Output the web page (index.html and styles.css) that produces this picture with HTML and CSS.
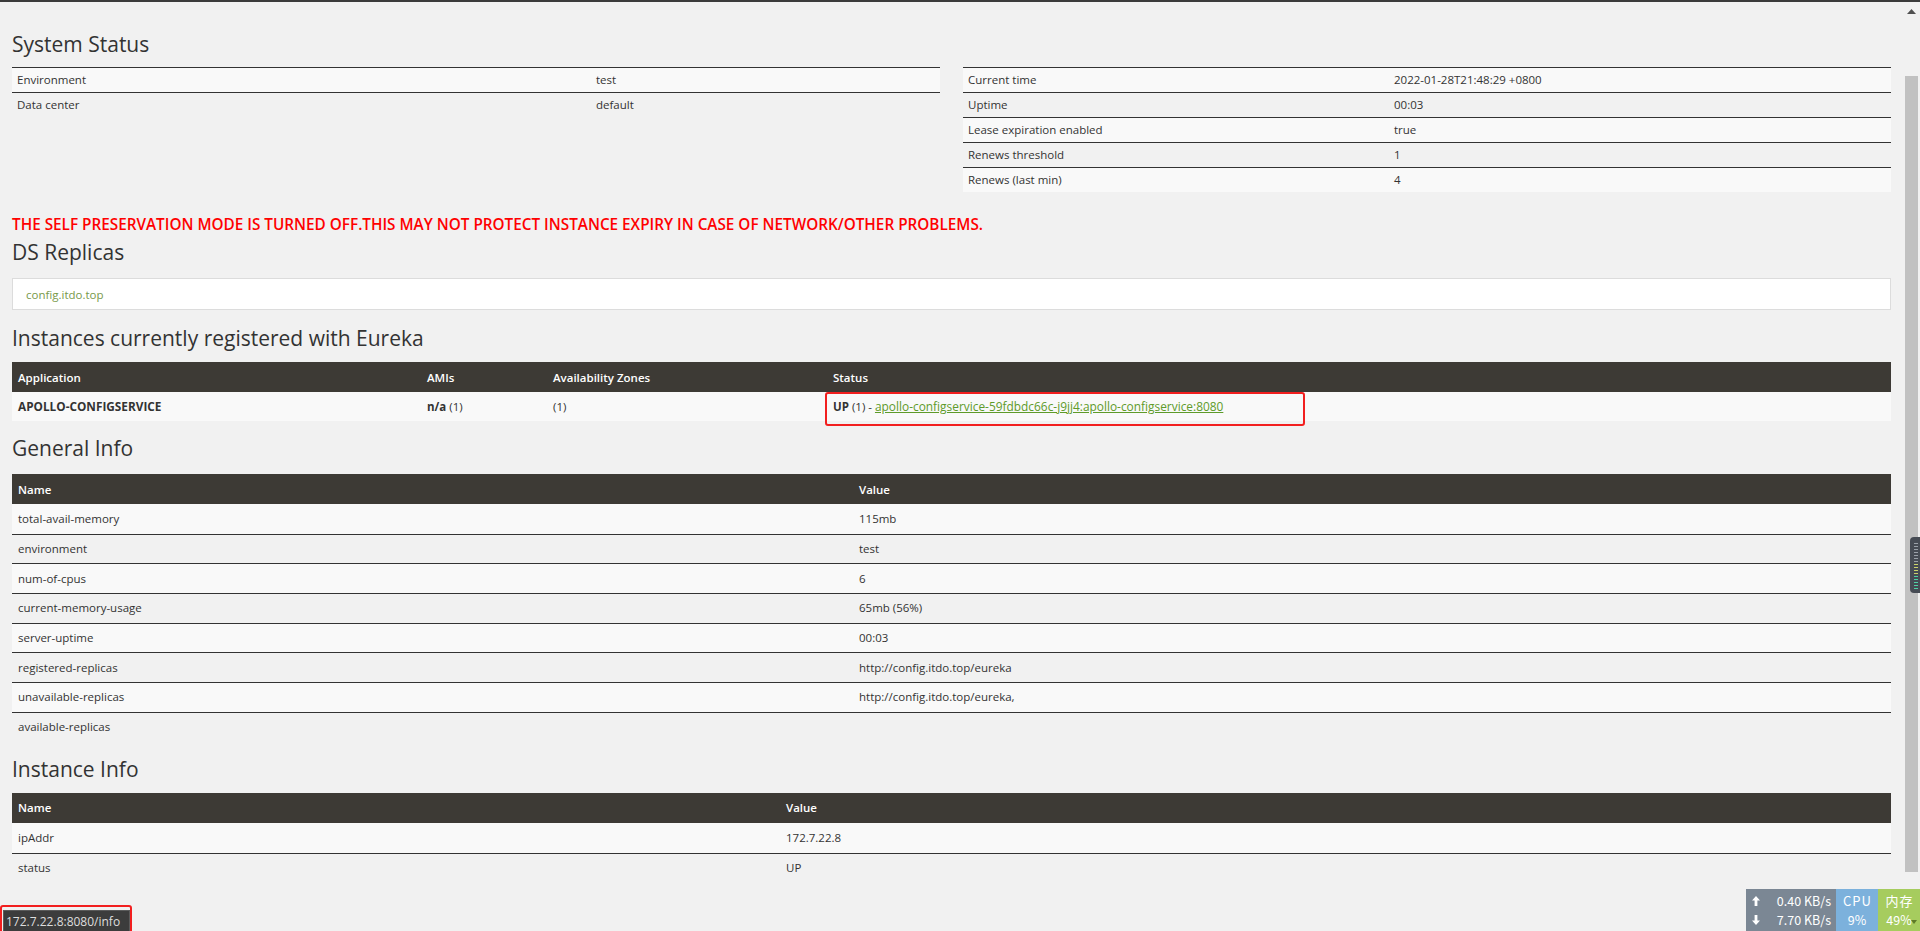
FILE: index.html
```html
<!DOCTYPE html>
<html lang="en">
<head>
<meta charset="utf-8">
<title>Eureka</title>
<link rel="stylesheet" href="styles.css">
</head>
<body>
<div class="topbar"></div>
<div class="page">
  <main class="content">
    <h2 class="h-first">System Status</h2>
    <div class="status-grid">
      <table class="kv">
        <colgroup><col class="kv-left-label"><col></colgroup>
        <tbody>
          <tr><td>Environment</td><td>test</td></tr>
          <tr><td>Data center</td><td>default</td></tr>
        </tbody>
      </table>
      <table class="kv">
        <colgroup><col class="kv-right-label"><col></colgroup>
        <tbody>
          <tr><td>Current time</td><td>2022-01-28T21:48:29 +0800</td></tr>
          <tr><td>Uptime</td><td>00:03</td></tr>
          <tr><td>Lease expiration enabled</td><td>true</td></tr>
          <tr><td>Renews threshold</td><td>1</td></tr>
          <tr><td>Renews (last min)</td><td>4</td></tr>
        </tbody>
      </table>
    </div>

    <h4 class="warn">THE SELF PRESERVATION MODE IS TURNED OFF.THIS MAY NOT PROTECT INSTANCE EXPIRY IN CASE OF NETWORK/OTHER PROBLEMS.</h4>

    <h2 class="h-ds">DS Replicas</h2>
    <ul class="replicas">
      <li><a href="#">config.itdo.top</a></li>
    </ul>

    <h2 class="h-inst">Instances currently registered with Eureka</h2>
    <table class="grid grid-instances">
      <colgroup><col class="c-app"><col class="c-ami"><col class="c-zone"><col></colgroup>
      <thead>
        <tr><th>Application</th><th>AMIs</th><th>Availability Zones</th><th>Status</th></tr>
      </thead>
      <tbody>
        <tr>
          <td><b class="app-name">APOLLO-CONFIGSERVICE</b></td>
          <td><b>n/a</b> (1)</td>
          <td>(1)</td>
          <td class="status-cell"><b>UP</b> (1) - <a href="#" class="inst-link">apollo-configservice-59fdbdc66c-j9jj4:apollo-configservice:8080</a><span class="mark mark-status"></span></td>
        </tr>
      </tbody>
    </table>

    <h2 class="h-gen">General Info</h2>
    <table class="grid grid-general">
      <colgroup><col class="c-gname"><col></colgroup>
      <thead><tr><th>Name</th><th>Value</th></tr></thead>
      <tbody>
        <tr><td>total-avail-memory</td><td>115mb</td></tr>
        <tr><td>environment</td><td>test</td></tr>
        <tr><td>num-of-cpus</td><td>6</td></tr>
        <tr><td>current-memory-usage</td><td>65mb (56%)</td></tr>
        <tr><td>server-uptime</td><td>00:03</td></tr>
        <tr><td>registered-replicas</td><td>http://config.itdo.top/eureka</td></tr>
        <tr><td>unavailable-replicas</td><td>http://config.itdo.top/eureka,</td></tr>
        <tr><td>available-replicas</td><td></td></tr>
      </tbody>
    </table>

    <h2 class="h-info">Instance Info</h2>
    <table class="grid grid-info">
      <colgroup><col class="c-iname"><col></colgroup>
      <thead><tr><th>Name</th><th>Value</th></tr></thead>
      <tbody>
        <tr><td>ipAddr</td><td>172.7.22.8</td></tr>
        <tr><td>status</td><td>UP</td></tr>
      </tbody>
    </table>
  </main>

  <div class="scrollbar">
    <div class="sb-up"><svg width="9" height="5" viewBox="0 0 9 5"><path d="M0 5 L4.5 0 L9 5 Z" fill="#505050"/></svg></div>
    <div class="sb-thumb"></div>
  </div>
</div>

<div class="side-widget"><div class="side-bars"></div></div>

<div class="statusbar-mark"><div class="statusbar">172.7.22.8:8080/info</div></div>

<div class="netmon">
  <div class="nm-net">
    <div class="nm-row"><svg class="nm-arrow" width="8" height="10" viewBox="0 0 8 10"><path d="M4 0 L8 4.6 L5.4 4.6 L5.4 10 L2.6 10 L2.6 4.6 L0 4.6 Z" fill="#fff"/></svg><span>0.40 KB/s</span></div>
    <div class="nm-row"><svg class="nm-arrow" width="8" height="10" viewBox="0 0 8 10"><path d="M4 10 L8 5.4 L5.4 5.4 L5.4 0 L2.6 0 L2.6 5.4 L0 5.4 Z" fill="#fff"/></svg><span>7.70 KB/s</span></div>
  </div>
  <div class="nm-cpu"><span class="nm-label">CPU</span><span>9%</span></div>
  <div class="nm-mem"><span class="nm-label">内存</span><span>49%</span><i class="nm-tri"></i></div>
</div>
</body>
</html>
```
FILE: styles.css
```css
* { box-sizing: border-box; }
html, body { margin: 0; height: 100%; }
body {
  background: #f1f1f1;
  font-family: "Open Sans", "Noto Sans", sans-serif;
  font-size: 11.5px;
  color: #333;
  overflow: hidden;
}
.topbar { height: 2px; background: #3b3b3b; }
.page { display: flex; height: 929px; }
.content { flex: 1; min-width: 0; padding: 30px 12px 0; }

h2 {
  font-size: 21px;
  font-weight: 400;
  line-height: 24px;
  margin: 0;
  color: #333;
}
.h-first { margin-bottom: 11px; }
.h-ds { margin: 6px 0 14px; }
.h-inst { margin: 16px 0 12px; }
.h-gen { margin: 15px 0 14px; }
.h-info { margin: 15px 0 12px; }

.status-grid {
  display: grid;
  grid-template-columns: 1fr 1fr;
  column-gap: 23px;
  align-items: start;
}
table { border-collapse: separate; border-spacing: 0; width: 100%; }
.kv td {
  height: 25px;
  padding: 0 5px;
  border-top: 1px solid #333;
  vertical-align: middle;
  line-height: 16px;
}
.kv tr:nth-child(odd) td { background: #f9f9f9; }
.kv-left-label { width: 579px; }
.kv-right-label { width: 426px; }

.warn {
  margin: 22px 0 0;
  font-size: 15.3px;
  line-height: 20px;
  font-weight: 600;
  color: #ff0000;
  white-space: nowrap;
}

.replicas {
  list-style: none;
  margin: 0;
  padding: 0;
}
.replicas li {
  height: 32px;
  background: #fff;
  border: 1px solid #dcdcdc;
  padding: 0 13px;
  display: flex;
  align-items: center;
}
.replicas a { color: #78994a; text-decoration: none; }

.grid th {
  background: #3d3a35;
  color: #fff;
  text-align: left;
  font-weight: 600;
  height: 30px;
  padding: 0 6px;
  vertical-align: middle;
}
.grid td {
  height: 29.7px;
  padding: 0 6px;
  border-top: 1px solid #333;
  vertical-align: middle;
  line-height: 16px;
}
.grid tbody tr:first-child td { border-top: 0; }
.grid tbody tr:nth-child(odd) td { background: #f9f9f9; }
.grid-instances td { height: 29px; }
.grid-info td { height: 30px; }
.c-app { width: 409px; }
.c-ami { width: 126px; }
.c-zone { width: 280px; }
.c-gname { width: 841px; }
.c-iname { width: 768px; }
.app-name { font-size: 11.8px; }

.status-cell { position: relative; }
.inst-link { color: #5e9b2a; text-decoration: underline; font-size: 11.9px; }
.mark {
  position: absolute;
  border: 2px solid #f21f1f;
  border-radius: 3px;
  pointer-events: none;
}
.mark-status { left: -2px; top: 0; width: 480px; height: 34px; }

/* fake scrollbar */
.scrollbar {
  width: 17px;
  background: #f1f1f1;
  display: flex;
  flex-direction: column;
  align-items: center;
}
.sb-up {
  height: 17px;
  display: flex;
  align-items: center;
  justify-content: center;
  width: 100%;
  padding-top: 2px;
}
.sb-thumb {
  margin-top: 57px;
  width: 13px;
  height: 796px;
  background: #c1c1c1;
}

/* overlays */
.side-widget {
  position: fixed;
  right: 0;
  top: 537px;
  width: 10px;
  height: 56px;
  background: #464b54;
  border-radius: 4px 0 0 4px;
  padding: 6px 2px 4px 4px;
}
.side-bars {
  height: 100%;
  background:
    repeating-linear-gradient(to bottom, transparent 0 1px, #464b54 1px 3px),
    linear-gradient(to bottom, #9aa0a8 0 45%, #c9d26a 45% 70%, #4fd1a4 70% 100%);
}

.statusbar-mark {
  position: fixed;
  left: 0;
  bottom: -3px;
  width: 132px;
  height: 29px;
  border: 2px solid #f21f1f;
  border-radius: 3px;
  padding: 3px 0 0 1px;
}
.statusbar {
  background: #3c3c3c;
  color: #dedede;
  font-size: 12px;
  line-height: 21px;
  height: 22px;
  width: 127px;
  padding-left: 2px;
  border: 1px solid #5a5a5a;
  white-space: nowrap;
}

.netmon {
  position: fixed;
  right: 0;
  bottom: 0;
  height: 42px;
  display: flex;
  font-family: "Noto Sans CJK SC", "Noto Sans", sans-serif;
  font-size: 12.5px;
  color: #fff;
  line-height: 19px;
}
.nm-net {
  width: 90px;
  background: #7b8794;
  padding: 2px 5px 0 6px;
}
.nm-row { display: flex; justify-content: space-between; align-items: center; height: 19px; }
.nm-arrow { flex: none; }
.nm-cpu, .nm-mem {
  width: 42px;
  display: flex;
  flex-direction: column;
  align-items: center;
  padding-top: 2px;
  position: relative;
}
.nm-label { font-size: 13px; letter-spacing: 1px; padding-left: 1px; }
.nm-cpu { background: #7cb1dc; }
.nm-mem { background: #a6cc5e; }
.nm-tri {
  position: absolute;
  right: 3px;
  bottom: 7px;
  width: 0; height: 0;
  border-left: 3px solid transparent;
  border-right: 3px solid transparent;
  border-top: 4px solid #5d7a28;
}
```
